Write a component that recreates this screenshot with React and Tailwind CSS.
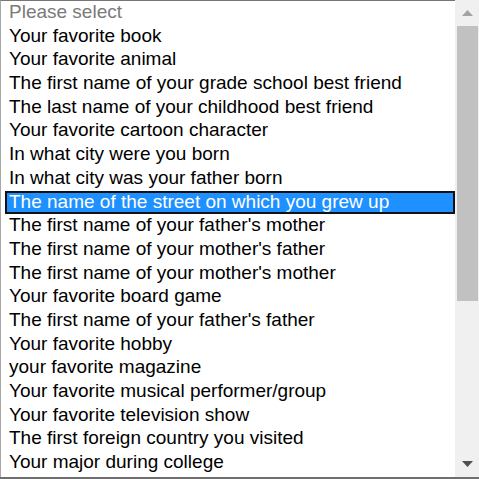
import React from 'react';

const questions = [
  'Please select',
  'Your favorite book',
  'Your favorite animal',
  'The first name of your grade school best friend',
  'The last name of your childhood best friend',
  'Your favorite cartoon character',
  'In what city were you born',
  'In what city was your father born',
  'The name of the street on which you grew up',
  "The first name of your father's mother",
  "The first name of your mother's father",
  "The first name of your mother's mother",
  'Your favorite board game',
  "The first name of your father's father",
  'Your favorite hobby',
  'your favorite magazine',
  'Your favorite musical performer/group',
  'Your favorite television show',
  'The first foreign country you visited',
  'Your major during college',
];

const SELECTED = 8;

export default function App() {
  return (
    <div
      className="w-[479px] h-[479px] bg-white flex overflow-hidden border-b-2 border-[#6f6f6f]"
      style={{ fontFamily: '"Liberation Sans", Arial, sans-serif' }}
    >
      {/* Option list */}
      <div className="w-[455px] h-full border-t border-[#767676] border-l border-l-[#a8a8a8] pl-[4px] overflow-hidden">
        {questions.map((q, i) => {
          const selected = i === SELECTED;
          return (
            <div
              key={q}
              className={`h-[23.7px] leading-[21.7px] pb-[2px] text-[19px] whitespace-nowrap pl-[4px] ${
                selected
                  ? 'bg-[#1e90ff] text-white outline-2 outline-[#111] -outline-offset-2'
                  : i === 0
                  ? 'text-[#7a7a7a]'
                  : 'text-black'
              }`}
            >
              {q}
            </div>
          );
        })}
      </div>

      {/* Scrollbar */}
      <div className="w-[24px] h-full bg-[#f0f0f0] flex flex-col items-center">
        <div className="h-[26px] w-full flex items-center justify-center">
          <svg width="11" height="6" viewBox="0 0 11 6">
            <polygon points="5.5,0 11,6 0,6" fill="#a3a3a3" />
          </svg>
        </div>
        <div className="w-[21px] h-[275px] bg-[#c1c1c1] ml-[1px]" />
        <div className="flex-1" />
        <div className="h-[26px] w-full flex items-center justify-center">
          <svg width="11" height="6" viewBox="0 0 11 6">
            <polygon points="0,0 11,0 5.5,6" fill="#505050" />
          </svg>
        </div>
      </div>
    </div>
  );
}
